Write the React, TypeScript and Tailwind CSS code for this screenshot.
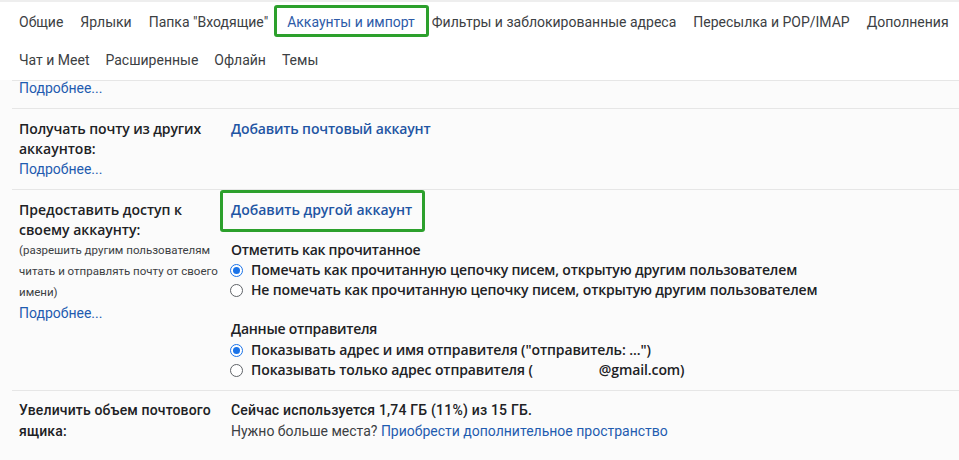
import React from "react";

const font = { fontFamily: "Roboto, 'Noto Sans', Arial, sans-serif" };
const bold = { fontFamily: "'Open Sans', Roboto, Arial, sans-serif" };

function Radio({ checked }: { checked?: boolean }) {
  return checked ? (
    <span className="inline-flex h-[13px] w-[13px] shrink-0 items-center justify-center rounded-full border-[1.5px] border-[#1a73e8] bg-white">
      <span className="h-[7px] w-[7px] rounded-full bg-[#1a73e8]" />
    </span>
  ) : (
    <span className="inline-block h-[13px] w-[13px] shrink-0 rounded-full border border-[#5f6368] bg-white" />
  );
}

function Tab({ label, active }: { label: string; active?: boolean }) {
  return (
    <span className="relative flex h-10 items-center">
      <span className={active ? "text-[#2d5ba8]" : "text-[#3c4043]"}>{label}</span>
      {active && (
        <span className="pointer-events-none absolute -left-[13px] -right-[14px] top-[3px] bottom-[5px] rounded-[3px] border-[3px] border-[#2ca02c]" />
      )}
    </span>
  );
}

function B({ children, className = "" }: { children: React.ReactNode; className?: string }) {
  return (
    <div className={"font-semibold text-[#202124] " + className} style={bold}>
      {children}
    </div>
  );
}

export default function App() {
  return (
    <div className="h-[460px] w-[959px] overflow-hidden bg-[#fbfbfb] text-[14px] text-[#222]" style={font}>
      <div className="border-t-2 border-[#eeeeee] bg-white">
        <div className="flex pl-[19px] gap-x-[17px]">
          <Tab label="Общие" />
          <Tab label="Ярлыки" />
          <Tab label='Папка "Входящие"' />
          <span className="ml-[2px]"><Tab label="Аккаунты и импорт" active /></span>
          <Tab label="Фильтры и заблокированные адреса" />
          <Tab label="Пересылка и POP/IMAP" />
          <Tab label="Дополнения" />
        </div>
        <div className="flex pl-[19px] gap-x-[16px] -mt-[2px]">
          <Tab label="Чат и Meet" />
          <Tab label="Расширенные" />
          <Tab label="Офлайн" />
          <Tab label="Темы" />
        </div>
      </div>

      <div className="ml-[12px] border-t border-[#e6e6e6]">
        <div className="pl-[7px] pb-[11px] -mt-[2px] leading-[18px] text-[#1f5cb0]">Подробнее...</div>
      </div>

      {/* Получать почту */}
      <div className="ml-[12px] flex border-t border-[#e6e6e6] pt-[10px] pb-[10px] leading-[20px]">
        <div className="w-[219px] shrink-0 pl-[7px]">
          <B className="tracking-[-0.1px]">Получать почту из других</B>
          <B>аккаунтов:</B>
          <div className="text-[#1f5cb0]">Подробнее...</div>
        </div>
        <div className="font-semibold tracking-[-0.15px] text-[#1f55a3]" style={bold}>Добавить почтовый аккаунт</div>
      </div>

      {/* Предоставить доступ */}
      <div className="ml-[12px] flex border-t border-[#e6e6e6] pt-[10px] pb-[10px] leading-[20px]">
        <div className="w-[219px] shrink-0 pl-[7px]">
          <B>Предоставить доступ к</B>
          <B>своему аккаунту:</B>
          <div className="text-[11.5px] leading-[21px] text-[#3c4043]">
            (разрешить другим пользователям читать и отправлять почту от своего имени)
          </div>
          <div className="text-[#1f5cb0]">Подробнее...</div>
        </div>
        <div className="flex flex-col">
          <div className="relative self-start">
            <span className="font-semibold text-[#1f55a3]" style={bold}>Добавить другой аккаунт</span>
            <span className="pointer-events-none absolute -left-[11px] -right-[13px] -top-[10px] -bottom-[12px] rounded-[3px] border-[3px] border-[#2ca02c]" />
          </div>
          <B className="mt-[20px] tracking-[-0.25px]">Отметить как прочитанное</B>
          <div className="flex items-center gap-[8px] -ml-[1px]">
            <Radio checked />
            <B className="tracking-[-0.15px]">Помечать как прочитанную цепочку писем, открытую другим пользователем</B>
          </div>
          <div className="flex items-center gap-[8px] -ml-[1px]">
            <Radio />
            <B className="tracking-[-0.15px]">Не помечать как прочитанную цепочку писем, открытую другим пользователем</B>
          </div>
          <B className="mt-[19px] tracking-[-0.25px]">Данные отправителя</B>
          <div className="mt-[1px] flex items-center gap-[8px] -ml-[1px]">
            <Radio checked />
            <B className="tracking-[-0.1px]">Показывать адрес и имя отправителя ("отправитель: ...")</B>
          </div>
          <div className="flex items-center gap-[8px] -ml-[1px]">
            <Radio />
            <B className="tracking-[-0.1px]">
              Показывать только адрес отправителя (<span className="inline-block w-[66px]" />@gmail.com)
            </B>
          </div>
        </div>
      </div>

      {/* Увеличить объем */}
      <div className="ml-[12px] flex border-t border-[#e6e6e6] pt-[9px] leading-[21px]">
        <div className="w-[219px] shrink-0 pl-[7px] font-medium tracking-[0.15px] text-[#202124]">
          <div>Увеличить объем почтового</div>
          <div>ящика:</div>
        </div>
        <div>
          <div className="font-medium tracking-[0.2px] text-[#202124]">Сейчас используется 1,74 ГБ (11%) из 15 ГБ.</div>
          <div className="text-[#3c4043]">
            Нужно больше места? <span className="text-[#1f5cb0]">Приобрести дополнительное пространство</span>
          </div>
        </div>
      </div>
    </div>
  );
}
